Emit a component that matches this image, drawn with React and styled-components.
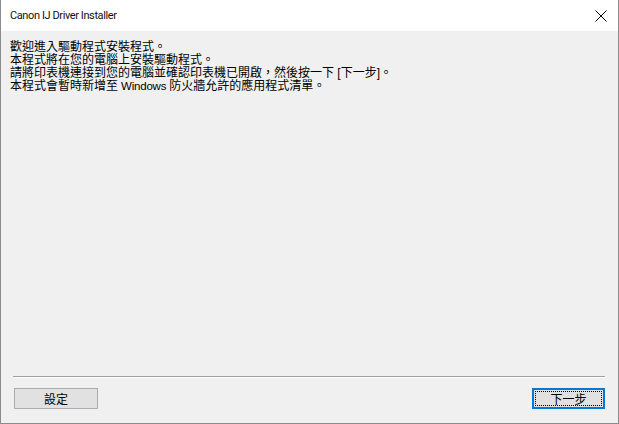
import styled, { createGlobalStyle } from "styled-components";

const Global = createGlobalStyle`
  html, body { margin: 0; padding: 0; background: #f0f0f0; }
  body { font-family: "Liberation Sans", "Noto Sans CJK TC", sans-serif; }
`;

const Window = styled.div`
  box-sizing: border-box;
  width: 619px;
  height: 424px;
  display: flex;
  flex-direction: column;
  background: #f0f0f0;
  border: 1px solid #8c8c8c;
  border-top: none;
`;

const TitleBar = styled.div`
  height: 31px;
  flex-shrink: 0;
  background: #ffffff;
  display: flex;
  align-items: center;
  justify-content: space-between;
  padding: 0 11px 0 9px;
`;

const Title = styled.span`
  font-family: "Roboto", sans-serif;
  font-size: 11px;
  letter-spacing: -0.4px;
  color: #111;
`;

const CloseBtn = styled.div`
  width: 12px;
  height: 12px;
  display: flex;
`;

const Body = styled.div`
  flex: 1;
  padding: 10px 9px 0 9px;
`;

const Line = styled.div`
  font-family: "Liberation Sans", "Noto Sans CJK TC", sans-serif;
  font-size: 12px;
  line-height: 13px;
  color: #000;
  white-space: nowrap;
`;

const Latin = styled.span`
  font-size: 11.5px;
  letter-spacing: -0.2px;
`;

const Footer = styled.div`
  padding: 0 13px 14px 12px;
  display: flex;
  flex-direction: column;
`;

const Separator = styled.div`
  height: 1px;
  background: #a0a0a0;
  border-bottom: 1px solid #ffffff;
  margin-bottom: 10px;
`;

const ButtonRow = styled.div`
  display: flex;
  justify-content: space-between;
  padding-left: 1px;
`;

const Button = styled.button`
  box-sizing: border-box;
  height: 21px;
  width: ${(p) => p.$w}px;
  padding: 0;
  background: #e1e1e1;
  border: ${(p) => (p.$default ? "2px solid #0078d7" : "1px solid #adadad")};
  font-family: "Liberation Sans", "Noto Sans CJK TC", sans-serif;
  font-size: 12px;
  color: #000;
  display: flex;
  align-items: center;
  justify-content: center;
  position: relative;
  ${(p) =>
    p.$default &&
    `&::after {
      content: "";
      position: absolute;
      inset: 1px;
      border: 1px dotted #000;
    }`}
`;

export default function App() {
  return (
    <>
      <Global />
      <Window>
        <TitleBar>
          <Title>Canon IJ Driver Installer</Title>
          <CloseBtn>
            <svg width="12" height="12" viewBox="0 0 12 12">
              <path d="M0.5 0.5 L11.5 11.5 M11.5 0.5 L0.5 11.5" stroke="#000" strokeWidth="1" />
            </svg>
          </CloseBtn>
        </TitleBar>
        <Body>
          <Line>歡迎進入驅動程式安裝程式。</Line>
          <Line>本程式將在您的電腦上安裝驅動程式。</Line>
          <Line>
            請將印表機連接到您的電腦並確認印表機已開啟，然後按一下 [下一步]。
          </Line>
          <Line>
            本程式會暫時新增至<Latin> Windows </Latin>防火牆允許的應用程式清單。
          </Line>
        </Body>
        <Footer>
          <Separator />
          <ButtonRow>
            <Button $w={84}>設定</Button>
            <Button $w={73} $default>
              下一步
            </Button>
          </ButtonRow>
        </Footer>
      </Window>
    </>
  );
}
